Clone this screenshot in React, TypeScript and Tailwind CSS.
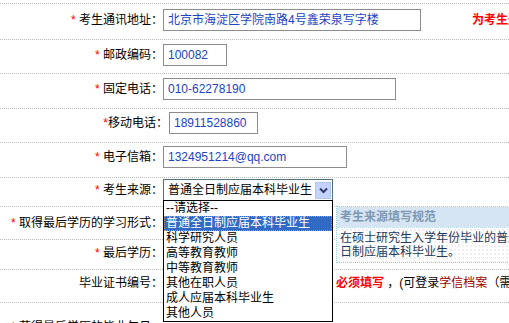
import React from 'react';

const rowBase = 'flex items-start border-b border-dotted border-[#bdbdbd]';

const Label = ({ text, star = true, space = true, w = 'w-[163px]' }: { text: string; star?: boolean; space?: boolean; w?: string }) => (
    <div className={`${w} shrink-0 h-[22px] flex items-center justify-end whitespace-pre`}>
        <span>
            {star && <span className="text-[#ff0000]">*</span>}
            {star && space ? ' ' : ''}
            {text}
        </span>
    </div>
);

const Field = ({ value, w, className = '' }: { value: string; w: string; className?: string }) => (
    <div className={`h-[22px] ${w} shrink-0 border border-[#8c8c8c] bg-white px-[4px] flex items-center text-[#1a44c4] whitespace-nowrap overflow-hidden ${className}`}>
        {value}
    </div>
);

const options = [
    '--请选择--',
    '普通全日制应届本科毕业生',
    '科学研究人员',
    '高等教育教师',
    '中等教育教师',
    '其他在职人员',
    '成人应届本科毕业生',
    '其他人员',
];

export default function App() {
    return (
        <div className="w-[509px] h-[323px] overflow-hidden bg-white pt-[3px] text-[12px] leading-[15px] text-black font-['Liberation_Sans','Noto_Sans_CJK_SC',sans-serif]">
            <div className="border-t border-dotted border-[#bdbdbd]">
                {/* 通讯地址 */}
                <div className={`${rowBase} h-[36px] pt-[5px]`}>
                    <Label text="考生通讯地址：" />
                    <Field value="北京市海淀区学院南路4号鑫荣泉写字楼" w="w-[258px]" />
                    <div className="shrink-0 h-[22px] ml-[51px] flex items-center whitespace-nowrap font-bold text-[#ff0000]">
                        为考生通讯地址
                    </div>
                </div>

                {/* 邮政编码 */}
                <div className={`${rowBase} h-[34px] pt-[4px]`}>
                    <Label text="邮政编码：" />
                    <Field value="100082" w="w-[64px]" />
                </div>

                {/* 固定电话 */}
                <div className={`${rowBase} h-[35px] pt-[4px]`}>
                    <Label text="固定电话：" />
                    <Field value="010-62278190" w="w-[233px]" />
                </div>

                {/* 移动电话 */}
                <div className={`${rowBase} h-[34px] pt-[3px]`}>
                    <Label text="移动电话：" space={false} w="w-[168px]" />
                    <Field value="18911528860" w="w-[89px]" className="ml-[1px]" />
                </div>

                {/* 电子信箱 */}
                <div className={`${rowBase} h-[35px] pt-[3px]`}>
                    <Label text="电子信箱：" />
                    <Field value="1324951214@qq.com" w="w-[184px]" />
                </div>

                {/* 考生来源 + open dropdown */}
                <div className={`${rowBase} h-[29px] pt-[1px]`}>
                    <Label text="考生来源：" />
                    <div className="relative z-10 shrink-0">
                        <div className="w-[170px] h-[22px] border border-[#4f7378] bg-white flex items-center pl-[4px]">
                            <span className="flex-1 whitespace-nowrap overflow-hidden">普通全日制应届本科毕业生</span>
                            <span className="w-[16px] h-[17px] mr-[1px] bg-[#c3d4fc] border border-[#b0c4f0] flex items-center justify-center">
                                <svg width="9" height="7" viewBox="0 0 9 7">
                                    <path d="M1 1.5 L4.5 5 L8 1.5" fill="none" stroke="#2e3e66" strokeWidth="2" />
                                </svg>
                            </span>
                        </div>

                        {/* dropdown list */}
                        <ul className="absolute left-0 top-[21px] w-[170px] border border-black bg-white">
                            {options.map((opt, i) => (
                                <li
                                    key={opt}
                                    className={`h-[15px] pl-[2px] whitespace-nowrap leading-[15px] ${
                                        i === 1 ? 'bg-[#316ac5] text-white outline-1 outline-dotted outline-[#d09050] -outline-offset-1' : ''
                                    }`}
                                >
                                    {opt}
                                </li>
                            ))}
                        </ul>

                        {/* fill-in tip */}
                        <div className="absolute left-[173px] top-[27px] w-[200px] border border-dotted border-[#8fd0e4] bg-white">
                            <div className="h-[20px] px-[3px] flex items-center bg-[#d6e5f4] text-[#7f98b2] font-bold whitespace-nowrap">
                                考生来源填写规范
                            </div>
                            <div className="h-[35px] px-[3px] pt-[3px] leading-[14px] text-[#1e3a5c] border-t border-dotted border-[#b8dcea] bg-[radial-gradient(circle,#dcdcdc_0.6px,transparent_0.8px)] bg-[length:4px_4px]">
                                在硕士研究生入学年份毕业的普通全日制应届本科毕业生。
                            </div>
                        </div>
                    </div>
                </div>

                {/* 学习形式 */}
                <div className={`${rowBase} h-[33px] pt-[5px]`}>
                    <Label text="取得最后学历的学习形式：" />
                    <div className="shrink-0 w-[150px] h-[22px] border border-[#4f7378]" />
                </div>

                {/* 最后学历 */}
                <div className={`${rowBase} h-[30px] pt-[2px]`}>
                    <Label text="最后学历：" />
                    <div className="shrink-0 w-[120px] h-[22px] border border-[#4f7378]" />
                </div>

                {/* 毕业证书编号 */}
                <div className={`${rowBase} h-[33px] pt-[2px]`}>
                    <Label text="毕业证书编号：" star={false} />
                    <Field value="" w="w-[170px]" />
                    <div className="shrink-0 h-[22px] ml-[3px] flex items-center whitespace-nowrap">
                        <span className="font-bold text-[#ff0000]">必须填写</span>
                        <span className="whitespace-pre"> ，(可登录</span>
                        <span className="text-[#990000]">学信档案</span>
                        <span>（需登录）</span>
                    </div>
                </div>

                {/* 毕业年月 */}
                <div className="flex items-start pt-[13px]">
                    <Label text="获得最后学历的毕业年月：" />
                </div>
            </div>
        </div>
    );
}
